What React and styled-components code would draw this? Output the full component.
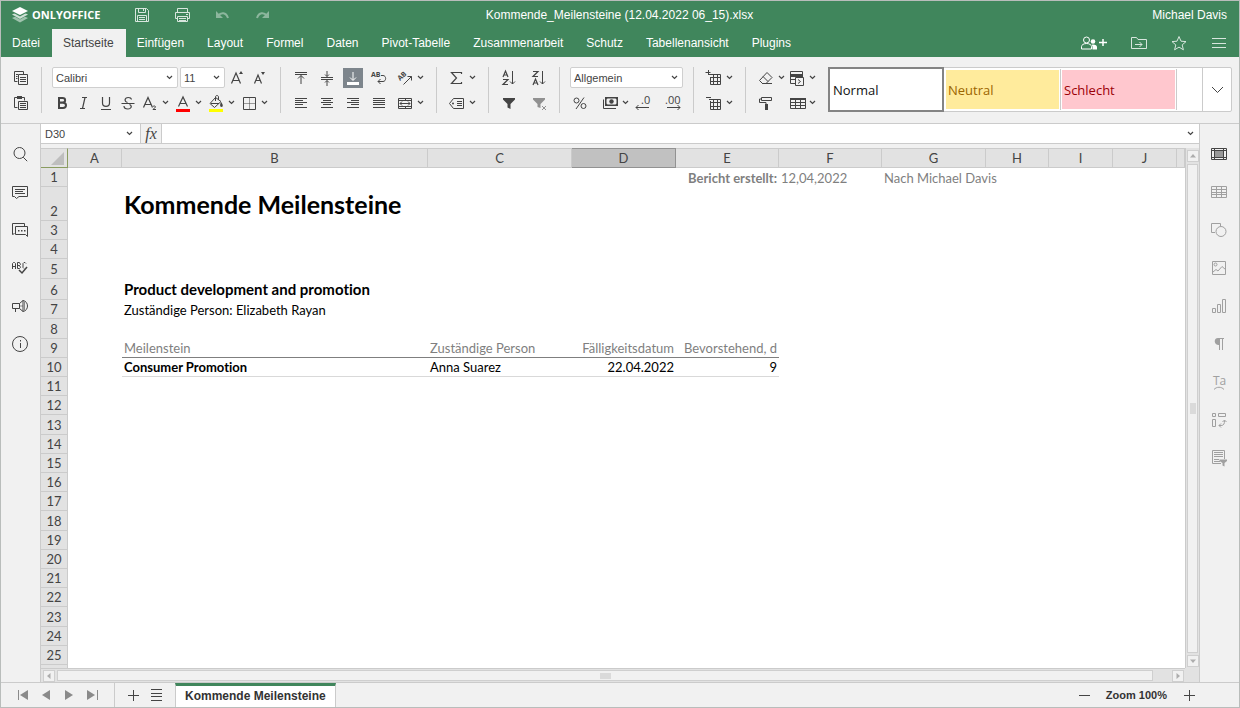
import React, { useState } from "react";
import styled, { createGlobalStyle } from "styled-components";

const GlobalStyle = createGlobalStyle`
  * {
    box-sizing: border-box;
  }
  body {
    margin: 0;
    font-family: "Liberation Sans", Arial, sans-serif;
    font-size: 12px;
    color: #444;
  }
  button,
  input,
  select {
    font: inherit;
    color: inherit;
    border: 0;
    padding: 0;
    margin: 0;
    background: none;
    border-radius: 0;
  }
  button {
    cursor: pointer;
  }
`;

const App = () => (
  <>
    <GlobalStyle />
    <Editor>
      <Header />
      <Toolbar />
      <Workspace>
        <Rail side="left" items={leftRail} />
        <Center>
          <FormulaBar />
          <SheetArea />
        </Center>
        <Rail side="right" items={rightRail} />
      </Workspace>
      <StatusBar />
    </Editor>
  </>
);

const Editor = styled.div`
  display: flex;
  flex-direction: column;
  height: 100vh;
  border: 1px solid #b9bdbb;
  background: #f1f1f1;
  overflow: hidden;
`;

const Workspace = styled.div`
  display: flex;
  flex: 1;
  min-height: 0;
`;

const Center = styled.div`
  display: flex;
  flex-direction: column;
  flex: 1;
  min-width: 0;
`;

/* ---------- icons ---------- */

const Svg = styled.svg`
  display: block;
  flex: none;
  fill: none;
  stroke: currentColor;
  stroke-width: 1;
  overflow: visible;
  .fill {
    fill: currentColor;
    stroke: none;
  }
  text {
    fill: currentColor;
    stroke: none;
    font-family: "Open Sans", sans-serif;
  }
`;

const Icon = ({ children }) => (
  <Svg width="20" height="20" viewBox="0 0 20 20" aria-hidden="true">
    {children}
  </Svg>
);

const Caret = () => (
  <Svg width="7" height="5" viewBox="0 0 7 5" aria-hidden="true">
    <path d="M1 1l2.5 2.5L6 1" strokeWidth="1.2" />
  </Svg>
);

const hLines = rows => rows.map(([x1, x2, y]) => `M${x1} ${y}.5H${x2}`).join("");

const icons = {
  save: (
    <path d="M3.500 3.500h11l2 2v11h-13zM6.500 3.500v4h7v-4M11.500 4v2M5.500 16.500v-6h9v6M7 12.500h6M7 14.500h6" />
  ),
  print: (
    <path d="M5.500 7.500v-4h10v4M5.500 13.500h-2v-6h14v6h-2M5.500 11.500h10v5h-10zM7 13.500h7M7 15.500h7M14 9.500h2" />
  ),
  undo: (
    <>
      <path className="fill" d="M4 6v7h7l-3-3z" />
      <path d="M6 11c3-4 8-4 10 2" strokeWidth="2" />
    </>
  ),
  redo: (
    <>
      <path className="fill" d="M17 6v7h-7l3-3z" />
      <path d="M15 11c-3-4-8-4-10 2" strokeWidth="2" />
    </>
  ),
  share: (
    <>
      <circle cx="5.500" cy="7" r="3" />
      <path d="M.5 16v-2.500c0-1.500 2-3 5-3s5 1.500 5 3V16z" />
      <circle className="fill" cx="12" cy="8.500" r="2.300" />
      <path className="fill" d="M12 11.500c2.500 0 4 1 4 2.500v2.500h-4.500V14c0-1-.5-1.800-1-2.300z" />
    </>
  ),
  folder: (
    <path d="M2.500 15.500v-11h5l1.500 2h8.500v9zM6 11.500h7M10.500 9l2.500 2.500-2.500 2.500" />
  ),
  star: (
    <path d="M10 3.500l2 4.700 5 .4-3.800 3.300 1.200 4.900-4.400-2.700-4.400 2.700 1.200-4.900L3 8.600l5-.4z" />
  ),
  menu: <path d="M3 5.500h14M3 10.500h14M3 14.500h14" />,
  copy: (
    <>
      <path d="M6.500 13.500h-3v-10h9v2.500M5 6.500h2M5 8.500h1.500M5 10.500h1.500" />
      <path d="M7.500 6.500h9v10h-9zM9 9.500h6M9 11.500h6M9 13.500h6" />
    </>
  ),
  paste: (
    <>
      <path d="M6.500 14.500h-3v-10h10v3" />
      <path className="fill" d="M6 3h5v3H6z" />
      <path d="M7.500 8.500h9v8h-9zM9 10.500h6M9 12.500h6M9 14.500h6" />
    </>
  ),
  bigger: (
    <>
      <path d="M4.500 15.500L9 5l4.500 10.500M6 12.500h6" strokeWidth="1.200" />
      <path className="fill" d="M12 6l2-3 2 3z" />
    </>
  ),
  smaller: (
    <>
      <path d="M5.500 15.500L9 7l3.500 8.500M6.500 12.500h5" strokeWidth="1.200" />
      <path className="fill" d="M12 4l2 3 2-3z" />
    </>
  ),
  bold: (
    <path d="M7 5h3.500c3.500 0 3.500 4.500 0 4.500H7zM7 9.700h4c4 0 4 5.300 0 5.300H7z" strokeWidth="2" />
  ),
  italic: <path d="M8 4.500h5M6 15.500h5M11 4.500l-2.500 11" strokeWidth="1.200" />,
  underline: <path d="M6.500 4v6c0 4.500 7 4.500 7 0V4M5 16.500h10" strokeWidth="1.200" />,
  strike: (
    <path
      d="M13.500 6.500C13 4 7.500 3.500 7 7c0 1 .8 2 2.500 2.500M11.500 11.500c3.500 2 1 4.500-1.500 4.500s-4-1-4-3M3.500 10.500h13"
      strokeWidth="1.200"
    />
  ),
  sub: (
    <>
      <path d="M3.500 14.500L8 4.500l4.500 10M5 11.500h6" strokeWidth="1.200" />
      <path d="M13 13.500c1-1 2.500-.5 2.500.5s-2.500 1.500-2.500 2.500h3" />
    </>
  ),
  fontColor: (
    <>
      <path d="M5.500 13.500L10 4l4.500 9.500M7 10.500h6" strokeWidth="1.200" />
      <path d="M3 16h14v3H3z" fill="#f00" stroke="none" />
    </>
  ),
  fillColor: (
    <>
      <path d="M9.500 4.500l-5.500 6 4.500 4 6.500-6zM9.500 8V4c0-2 3-2 3 0v3M5 10.500h8" />
      <path className="fill" d="M15 9c2 2 2.500 5 .5 5s-1.500-3-.5-5z" />
      <path d="M3 16h14v3H3z" fill="#ff0" stroke="none" />
    </>
  ),
  borders: (
    <>
      <path d="M4.500 4.500h12v12h-12z" />
      <path d="M10.500 5v11M5 10.500h11" opacity=".5" />
    </>
  ),
  alignTop: <path d="M4 4.500h12M4 6.500h12M10 16V7.500M7 10.500l3-3 3 3" />,
  alignMiddle: <path d="M4 9.500h12M4 11.500h12M10 3v5.500M8 6.500l2 2 2-2M10 18v-5.500M8 14.500l2-2 2 2" />,
  alignBottom: (
    <>
      <path d="M10 4v8M7 9.500l3 3 3-3" />
      <path d="M4 14h12v3H4z" fill="currentColor" stroke="none" />
    </>
  ),
  wrap: (
    <>
      <text x="2" y="9" fontSize="7" fontWeight="700">AB</text>
      <path d="M12 7.500h2c3.500 0 3.500 6 0 6H9M11.500 11L9 13.500l2.500 2.500" />
    </>
  ),
  orient: (
    <>
      <text x="5" y="13" fontSize="7" fontWeight="700" transform="rotate(-42 5 13)">AB</text>
      <path d="M8.500 16.500l8-8M12.500 8.500h4v4" />
    </>
  ),
  left: <path d={hLines([[4, 16, 5], [4, 12, 7], [4, 16, 9], [4, 12, 11], [4, 16, 14]])} />,
  center: <path d={hLines([[4, 16, 5], [6, 14, 7], [4, 16, 9], [6, 14, 11], [4, 16, 14]])} />,
  right: <path d={hLines([[4, 16, 5], [8, 16, 7], [4, 16, 9], [8, 16, 11], [4, 16, 14]])} />,
  justify: <path d={hLines([[4, 16, 5], [4, 16, 7], [4, 16, 9], [4, 16, 11], [4, 16, 14]])} />,
  merge: (
    <path d="M3.500 5.500h13v10h-13zM3.500 7.500h13M3.500 13.500h13M10.500 5.500v2M10.500 13.500v2M5 10.500h10M7 8.500l-2 2 2 2M13 8.500l2 2-2 2" />
  ),
  sum: <path d="M14.500 6V4.500h-10l5 5.500-5 5.500h10V14" strokeWidth="1.200" />,
  named: (
    <>
      <path d="M6.500 5.500h10v10h-10l-4-5z" />
      <circle className="fill" cx="6" cy="10.500" r="1" />
      <path d="M10 8.500h5M10 10.500h5M10 12.500h5" />
    </>
  ),
  sortAz: (
    <>
      <path d="M4 9l2.500-6L9 9M5 7h3M4 11.500h5l-5 5h5" strokeWidth="1.200" />
      <path d="M13.500 3v13M11 13.500l2.500 2.500 2.500-2.500" />
    </>
  ),
  sortZa: (
    <>
      <path d="M4 3.500h5l-5 5h5M4 17l2.500-6L9 17M5 15h3" strokeWidth="1.200" />
      <path d="M13.500 3v13M11 13.500l2.500 2.500 2.500-2.500" />
    </>
  ),
  filter: <path className="fill" d="M4 5h12v1.500L11.500 11v5l-3-1.500V11L4 6.500z" />,
  clearFilter: (
    <g opacity=".55">
      <path className="fill" d="M4 5h12v1.500L11.500 11v4l-3-1V11L4 6.500z" />
      <path d="M13 13l4 4M17 13l-4 4" />
    </g>
  ),
  percent: (
    <g>
      <circle cx="6.500" cy="7.500" r="2.500" />
      <circle cx="13.500" cy="13" r="2.500" />
      <path d="M14 4.500l-8 11.500" />
    </g>
  ),
  money: (
    <>
      <path className="fill" fillRule="evenodd" d="M5 4h13v9H5zM6.500 6.500v4l1 1h8l1-1v-4l-1-1h-8z" />
      <circle className="fill" cx="11.500" cy="8.500" r="2.200" />
      <path d="M3.500 6.500v9H16" />
    </>
  ),
  decLess: (
    <>
      <text x="8" y="11" fontSize="11">.0</text>
      <path d="M3 14.500h13M5.500 12L3 14.500 5.500 17" />
    </>
  ),
  decMore: (
    <>
      <text x="2" y="11" fontSize="11">.00</text>
      <path d="M4 14.500h13M14.500 12l2.500 2.500-2.500 2.500" />
    </>
  ),
  addCells: (
    <path d="M5 6.500h11.500v10h-10V9M6.500 9.500h10M6.500 13.500h10M9.500 6v10.500M13.500 6v10.500M1.500 4.500h5M4.500 2v5" />
  ),
  delCells: (
    <path d="M5 6.500h11.500v10h-10V8M6.500 9.500h10M6.500 13.500h10M9.500 6v10.500M13.500 6v10.500M2 4.500h5" />
  ),
  eraser: <path d="M11 4.500l5 5-6 6H6.500l-3-3zM7 8.500l5 5M6 15.500h10" />,
  condFormat: (
    <>
      <path d="M8 15.500H3.500v-12h12V9M4 11.500h4" />
      <path className="fill" d="M4 6h11v3H4z" />
      <path d="M8.500 9.500h8v8h-8zM11 11.500l2.500 2-2.500 2" />
    </>
  ),
  painter: (
    <>
      <path d="M5.500 4.500h10v3h-10zM5.500 6H3.500v3.500H10v2" />
      <path className="fill" d="M9 11h3v6H9z" />
    </>
  ),
  tableTpl: (
    <>
      <path d="M3.500 5.500h15v10h-15zM3.500 9.500h15M3.500 12.500h15M8.500 6v10M13.500 6v10" />
      <path className="fill" d="M3 5h16v2H3z" />
    </>
  ),
  search: <path d="M15 9a5.500 5.500 0 1 1-11 0 5.500 5.500 0 0 1 11 0zM13.200 13.200l4 4" />,
  comment: <path d="M2.500 4.500h15v10H9l-2.500 2-2-2h-2zM5 7.500h10M5 9.500h8M5 11.500h10" />,
  chat: (
    <>
      <path d="M4.500 13.500l-2 1v-11h12v3" />
      <path d="M5.500 6.500h12v10l-2-2h-10z" />
      <path className="fill" d="M8 10h1.500v1.500H8zM11 10h1.500v1.500H11zM14 10h1.500v1.500H14z" />
    </>
  ),
  spell: (
    <>
      <path d="M2.500 11V5.500l1-1h1l1 1V11M2.500 8.500h3M7.500 4.500v6h2l1-1-1-2 1-1-1-2zM7.500 7.500h2M16 5.500l-1-1h-1l-1 1v4l1 1" />
      <path d="M9 12l3 3 5-6" strokeWidth="1.500" />
    </>
  ),
  feedback: (
    <>
      <path d="M2.500 7.500h7v5h-7zM5.500 13v3M9.500 7.500l3.500-3v11l-3.500-3M13 4.500c6 1 6 10 0 11" />
      <path d="M14.500 6v8M9 10h4" opacity=".6" />
    </>
  ),
  info: (
    <>
      <circle cx="10" cy="10" r="7.500" />
      <path d="M10.500 9v5M10.500 6v1.500" />
    </>
  ),
  cell: (
    <>
      <path d="M2.500 4.500h15v11h-15zM5.500 4.500v11M14.500 4.500v11M2.500 6.500h15M2.500 13.500h15" />
      <path d="M5.500 6.500h9v7h-9z" fill="#999" />
    </>
  ),
  table: <path d="M2.500 4.500h15v11h-15zM2.500 7.500h15M2.500 10.500h15M2.500 12.500h15M7.500 4.500v11M12.500 4.500v11" />,
  shape: (
    <>
      <path d="M6 12.500H2.500v-9h9V6" />
      <circle cx="12" cy="11.500" r="5" />
    </>
  ),
  image: (
    <>
      <path d="M3.500 3.500h13v13h-13zM4 14l3-2.500 2 1.500 4-4.500 3.500 3" />
      <circle cx="6.500" cy="6.500" r="1.500" />
    </>
  ),
  chart: <path d="M3.500 12.500h3v4h-3zM8.500 8.500h3v8h-3zM13.500 3.500h3v13h-3z" />,
  para: (
    <>
      <path className="fill" d="M9 4h6v1h-1v11h-1V5h-2v11h-1v-5C4.500 11 4.500 4 9 4z" />
      <path className="fill" d="M9 4h2v7H9z" />
    </>
  ),
  textArt: (
    <>
      <text x="4" y="13" fontSize="12">Ta</text>
      <path d="M5 17.500c2.500-3 7.500-3 10 0" />
    </>
  ),
  pivot: (
    <path d="M3.500 3.500h3v3h-3zM9.500 3.500h7v3h-7zM3.500 9.500h3v7h-3zM10 15.500h2c3 0 3.500-2 3.500-5M13.500 12l2-2 2 2M12 13.500l-2 2 2 2" />
  ),
  slicer: (
    <>
      <path d="M12 15.500H3.500v-13h12V11M5 4.500h9M5 6.500h9M5 8.500h9M5 11.500h5M5 13.500h6" />
      <path className="fill" d="M10.500 11.500H18v1.500l-2.500 2v3.500l-2-1v-2.500l-3-2z" />
    </>
  ),
  list: <path d="M4 4.500h11M4 8.500h11M4 11.500h11M4 15.500h11" />,
  first: (
    <>
      <path className="fill" d="M15 5v10l-8-5z" />
      <path d="M5.500 5v10" />
    </>
  ),
  prev: <path className="fill" d="M14 5v10l-8-5z" />,
  next: <path className="fill" d="M6 5v10l8-5z" />,
  last: (
    <>
      <path className="fill" d="M5 5v10l8-5z" />
      <path d="M15.500 5v10" />
    </>
  ),
  plus: <path d="M10.500 5v11M5 10.500h11" />,
  minus: <path d="M5 10.500h11" />,
  up: <path className="fill" d="M7 11.500h6L10 8z" />,
  down: <path className="fill" d="M7 8.500h6L10 12z" />,
  leftArrow: <path className="fill" d="M11.500 7v6L8 10z" />,
  rightArrow: <path className="fill" d="M8.500 7v6l3.500-3z" />
};

/* ---------- header ---------- */

const HeaderBar = styled.header`
  flex: none;
  background: #40865c;
  color: #fff;
`;

const TitleRow = styled.div`
  display: grid;
  grid-template-columns: 1fr auto 1fr;
  align-items: center;
  height: 28px;
  padding: 0 12px 0 11px;
`;

const TitleLeft = styled.div`
  display: flex;
  align-items: center;
`;

const Logo = styled.a`
  display: flex;
  align-items: center;
  gap: 4px;
  width: 120px;
  color: #fff;
  text-decoration: none;
  font: 700 11px/16px "Open Sans", sans-serif;
`;

const QuickActions = styled.div`
  display: flex;
  gap: 20px;
`;

const HeaderButton = styled.button`
  display: flex;
  align-items: center;
  justify-content: center;
  width: 20px;
  height: 20px;
  opacity: ${props => (props.disabled ? 0.4 : 0.8)};
`;

const UserName = styled.span`
  justify-self: end;
`;

const TabRow = styled.nav`
  display: flex;
  height: 28px;
  padding-right: 10px;
`;

const Tab = styled.button`
  padding: 0 12px 0 11px;
  white-space: nowrap;
  color: ${props => (props.$active ? "#444" : "#fff")};
  background: ${props => (props.$active ? "#f1f1f1" : "none")};
`;

const TabActions = styled.div`
  display: flex;
  align-items: center;
  gap: 20px;
  margin-left: auto;
`;

const ShareButton = styled(HeaderButton)`
  width: 28px;
  justify-content: flex-start;
  opacity: 1;
`;

const tabs = [
  "Datei",
  "Startseite",
  "Einfügen",
  "Layout",
  "Formel",
  "Daten",
  "Pivot-Tabelle",
  "Zusammenarbeit",
  "Schutz",
  "Tabellenansicht",
  "Plugins"
];

const Header = () => {
  const [active, setActive] = useState("Startseite");
  return (
    <HeaderBar>
      <TitleRow>
        <TitleLeft>
          <Logo href="#">
            <svg width="16" height="16" viewBox="0 0 16 16" aria-hidden="true">
              <path d="M0 11l8-3.500 8 3.500-8 4.500z" fill="#fff" opacity=".5" />
              <path d="M0 8l8-3.500L16 8l-8 4.500z" fill="#40865c" />
              <path d="M0 7.500L8 4l8 3.500L8 12z" fill="#fff" opacity=".75" />
              <path d="M0 5l8-3.500L16 5 8 9.500z" fill="#40865c" />
              <path d="M0 4l8-4 8 4-8 4z" fill="#fff" />
            </svg>
            ONLYOFFICE
          </Logo>
          <QuickActions>
            <HeaderButton aria-label="Speichern"><Icon>{icons.save}</Icon></HeaderButton>
            <HeaderButton aria-label="Drucken"><Icon>{icons.print}</Icon></HeaderButton>
            <HeaderButton aria-label="Rückgängig" disabled><Icon>{icons.undo}</Icon></HeaderButton>
            <HeaderButton aria-label="Wiederholen" disabled><Icon>{icons.redo}</Icon></HeaderButton>
          </QuickActions>
        </TitleLeft>
        <span>Kommende_Meilensteine (12.04.2022 06_15).xlsx</span>
        <UserName>Michael Davis</UserName>
      </TitleRow>
      <TabRow>
        {tabs.map(name => (
          <Tab key={name} $active={name === active} onClick={() => setActive(name)}>
            {name}
          </Tab>
        ))}
        <TabActions>
          <ShareButton aria-label="Freigeben">
            <Svg width="28" height="20" viewBox="0 0 28 20" aria-hidden="true">
              {icons.share}
              <path d="M18 9.500h8M22 6v7" strokeWidth="1.500" />
            </Svg>
          </ShareButton>
          <HeaderButton aria-label="Dateispeicherort öffnen"><Icon>{icons.folder}</Icon></HeaderButton>
          <HeaderButton aria-label="Favorit"><Icon>{icons.star}</Icon></HeaderButton>
          <HeaderButton aria-label="Ansicht-Einstellungen"><Icon>{icons.menu}</Icon></HeaderButton>
        </TabActions>
      </TabRow>
    </HeaderBar>
  );
};

/* ---------- toolbar ---------- */

const ToolbarBar = styled.div`
  display: flex;
  flex: none;
  padding: 10px 7px 10px 0;
  border-bottom: 1px solid #cbcbcb;
`;

const Group = styled.div`
  display: flex;
  flex-direction: column;
  flex: none;
  gap: 4px;
  padding: 0 10px;
  border-right: ${props => (props.$last ? "0" : "1px solid #cbcbcb")};
`;

const Row = styled.div`
  display: flex;
  align-items: center;
  height: 21px;
  gap: ${props => props.$gap || 0}px;
  justify-content: ${props => (props.$spread ? "space-between" : "flex-start")};
`;

const ToolButton = styled.button`
  width: 20px;
  height: 20px;
  color: ${props => (props.$active ? "#fff" : "#444")};
  background: ${props => (props.$active ? "#7d858c" : "none")};
`;

const MenuButton = styled(ToolButton)`
  display: flex;
  align-items: center;
  gap: 2px;
  width: 31px;
`;

const SelectBox = styled.label`
  display: flex;
  align-items: center;
  width: ${props => props.$width}px;
  height: 21px;
  padding: 0 4px 0 3px;
  border: 1px solid #cfcfcf;
  border-radius: 2px;
  background: #fff;
  font-size: 11px;
  select {
    flex: 1;
    min-width: 0;
    appearance: none;
    outline: none;
  }
`;

const Tool = ({ icon, label, active }) => (
  <ToolButton aria-label={label} $active={active}>
    <Icon>{icons[icon]}</Icon>
  </ToolButton>
);

const MenuTool = ({ icon, label }) => (
  <MenuButton aria-label={label}>
    <Icon>{icons[icon]}</Icon>
    <Caret />
  </MenuButton>
);

const Select = ({ label, width, options }) => (
  <SelectBox $width={width}>
    <select aria-label={label}>
      {options.map(option => (
        <option key={option}>{option}</option>
      ))}
    </select>
    <Caret />
  </SelectBox>
);

const Gallery = styled.div`
  display: flex;
  flex: 1;
  min-width: 0;
  height: 45px;
  border: 1px solid #cbcbcb;
  border-radius: 2px;
  background: #fff;
`;

const StyleItem = styled.button`
  flex: none;
  width: ${props => (props.$selected ? 116 : 115)}px;
  margin: ${props => (props.$selected ? "-1px 1px -1px -1px" : "1px 1px 1px 0")};
  padding-left: ${props => (props.$selected ? 3 : 2)}px;
  text-align: left;
  font: 13px/20px "Open Sans", sans-serif;
  color: ${props => props.$color};
  background: ${props => props.$bg};
  border: ${props => (props.$selected ? "2px solid #848484" : "1px solid #fff")};
  box-shadow: ${props => (props.$selected ? "none" : "1px 0 0 #cbcbcb")};
`;

const GalleryMore = styled.button`
  display: flex;
  align-items: center;
  justify-content: center;
  width: 29px;
  margin-left: auto;
  border-left: 1px solid #cbcbcb;
`;

const Toolbar = () => (
  <ToolbarBar>
    <Group>
      <Row><Tool icon="copy" label="Kopieren" /></Row>
      <Row><Tool icon="paste" label="Einfügen" /></Row>
    </Group>
    <Group>
      <Row $gap={2}>
        <Select label="Schriftart" width={126} options={["Calibri", "Arial"]} />
        <Select label="Schriftgrad" width={45} options={["11", "12", "14"]} />
        <Tool icon="bigger" label="Schriftart vergrößern" />
        <Tool icon="smaller" label="Schriftart verkleinern" />
      </Row>
      <Row $gap={2}>
        <Tool icon="bold" label="Fett" />
        <Tool icon="italic" label="Kursiv" />
        <Tool icon="underline" label="Unterstrichen" />
        <Tool icon="strike" label="Durchgestrichen" />
        <MenuTool icon="sub" label="Tiefgestellt" />
        <MenuTool icon="fontColor" label="Schriftfarbe" />
        <MenuTool icon="fillColor" label="Füllfarbe" />
        <MenuTool icon="borders" label="Rahmenlinien" />
      </Row>
    </Group>
    <Group>
      <Row $gap={6}>
        <Tool icon="alignTop" label="Oben ausrichten" />
        <Tool icon="alignMiddle" label="Mittig ausrichten" />
        <Tool icon="alignBottom" label="Unten ausrichten" active />
        <Tool icon="wrap" label="Zeilenumbruch" />
        <MenuTool icon="orient" label="Ausrichtung" />
      </Row>
      <Row $gap={6}>
        <Tool icon="left" label="Linksbündig" />
        <Tool icon="center" label="Zentriert" />
        <Tool icon="right" label="Rechtsbündig" />
        <Tool icon="justify" label="Blocksatz" />
        <MenuTool icon="merge" label="Verbinden" />
      </Row>
    </Group>
    <Group>
      <Row><MenuTool icon="sum" label="Summe" /></Row>
      <Row><MenuTool icon="named" label="Benannte Bereiche" /></Row>
    </Group>
    <Group>
      <Row $gap={10}>
        <Tool icon="sortAz" label="Aufsteigend sortieren" />
        <Tool icon="sortZa" label="Absteigend sortieren" />
      </Row>
      <Row $gap={10}>
        <Tool icon="filter" label="Filter" />
        <Tool icon="clearFilter" label="Filter löschen" />
      </Row>
    </Group>
    <Group>
      <Row>
        <Select label="Zahlenformat" width={113} options={["Allgemein", "Zahl"]} />
      </Row>
      <Row $gap={10}>
        <Tool icon="percent" label="Prozent" />
        <Row $gap={2}>
          <MenuTool icon="money" label="Buchhaltung" />
          <Tool icon="decLess" label="Dezimalstelle entfernen" />
        </Row>
        <Tool icon="decMore" label="Dezimalstelle hinzufügen" />
      </Row>
    </Group>
    <Group>
      <Row><MenuTool icon="addCells" label="Zellen einfügen" /></Row>
      <Row><MenuTool icon="delCells" label="Zellen löschen" /></Row>
    </Group>
    <Group $last>
      <Row>
        <MenuTool icon="eraser" label="Löschen" />
        <MenuTool icon="condFormat" label="Bedingte Formatierung" />
      </Row>
      <Row $spread>
        <Tool icon="painter" label="Format übertragen" />
        <MenuTool icon="tableTpl" label="Als Tabelle formatieren" />
      </Row>
    </Group>
    <Gallery>
      <StyleItem $selected $color="#111" $bg="#fff">Normal</StyleItem>
      <StyleItem $color="#9c6500" $bg="#ffeb9c">Neutral</StyleItem>
      <StyleItem $color="#9c0006" $bg="#ffc7ce">Schlecht</StyleItem>
      <GalleryMore aria-label="Weitere Formatvorlagen">
        <Svg width="13" height="8" viewBox="0 0 13 8" aria-hidden="true">
          <path d="M1 1l5.500 5.500L12 1" />
        </Svg>
      </GalleryMore>
    </Gallery>
  </ToolbarBar>
);

/* ---------- side rails ---------- */

const RailBar = styled.aside`
  display: flex;
  flex-direction: column;
  flex: none;
  align-items: center;
  gap: 18px;
  width: 40px;
  padding: 20px 2px 0 0;
  border-left: ${props => (props.$side === "right" ? "1px solid #cbcbcb" : "0")};
  border-right: ${props => (props.$side === "left" ? "1px solid #cbcbcb" : "0")};
`;

const RailButton = styled.button`
  width: 20px;
  height: 20px;
  color: ${props => (props.disabled ? "#a0a0a0" : "#444")};
`;

const leftRail = [
  { icon: "search", label: "Suchen" },
  { icon: "comment", label: "Kommentare" },
  { icon: "chat", label: "Chat" },
  { icon: "spell", label: "Rechtschreibprüfung" },
  { icon: "feedback", label: "Feedback und Support" },
  { icon: "info", label: "Info" }
];

const rightRail = [
  { icon: "cell", label: "Zelleneinstellungen" },
  { icon: "table", label: "Tabelleneinstellungen", disabled: true },
  { icon: "shape", label: "Formeinstellungen", disabled: true },
  { icon: "image", label: "Bildeinstellungen", disabled: true },
  { icon: "chart", label: "Diagrammeinstellungen", disabled: true },
  { icon: "para", label: "Absatzeinstellungen", disabled: true },
  { icon: "textArt", label: "TextArt-Einstellungen", disabled: true },
  { icon: "pivot", label: "Pivot-Einstellungen", disabled: true },
  { icon: "slicer", label: "Datenschnitt-Einstellungen", disabled: true }
];

const Rail = ({ side, items }) => (
  <RailBar $side={side}>
    {items.map(({ icon, label, disabled }) => (
      <RailButton key={icon} aria-label={label} disabled={disabled}>
        <Icon>{icons[icon]}</Icon>
      </RailButton>
    ))}
  </RailBar>
);

/* ---------- formula bar ---------- */

const FormulaRow = styled.div`
  display: flex;
  flex: none;
  height: 20px;
  border-bottom: 1px solid #cbcbcb;
  background: #fff;
`;

const CellName = styled.div`
  display: flex;
  align-items: center;
  width: 100px;
  padding: 0 7px 0 4px;
  border-right: 1px solid #cbcbcb;
  font-size: 11px;
  input {
    flex: 1;
    min-width: 0;
  }
`;

const FxButton = styled.button`
  width: 21px;
  background: #f1f1f1;
  border-right: 1px solid #cbcbcb;
  font: italic 16px/18px "Liberation Serif", serif;
`;

const FormulaInput = styled.input`
  flex: 1;
  min-width: 0;
  padding: 0 6px;
`;

const Expand = styled.button`
  display: flex;
  align-items: center;
  justify-content: center;
  width: 17px;
`;

const FormulaBar = () => (
  <FormulaRow>
    <CellName>
      <input aria-label="Namensfeld" defaultValue="D30" />
      <Caret />
    </CellName>
    <FxButton aria-label="Funktion einfügen">fx</FxButton>
    <FormulaInput aria-label="Formel" />
    <Expand aria-label="Bearbeitungsleiste erweitern"><Caret /></Expand>
  </FormulaRow>
);

/* ---------- sheet ---------- */

const SheetGrid = styled.div`
  display: grid;
  grid-template-columns: minmax(0, 1fr) 14px;
  grid-template-rows: minmax(0, 1fr) 14px;
  flex: 1;
  min-height: 0;
  margin-top: 4px;
  background: #e2e2e2;
`;

const SheetView = styled.div`
  overflow: hidden;
  background: #fff;
`;

const Grid = styled.table`
  width: 100%;
  table-layout: fixed;
  border-collapse: separate;
  border-spacing: 0;
  font: 13px/18px Lato, sans-serif;
  font-variant-ligatures: none;
  color: #000;
  th,
  td {
    padding: 0 2px;
    vertical-align: bottom;
    white-space: nowrap;
  }
`;

const HeadCell = styled.th`
  height: 20px;
  font-weight: 400;
  color: #444;
  background: ${props => (props.$active ? "#c1c1c1" : "#e2e2e2")};
  border: solid ${props => (props.$active ? "#929292" : "#cbcbcb")};
  border-width: 1px 1px 1px 0;
`;

const Corner = styled(HeadCell)`
  border-color: #cbcbcb #8a9c60 #8a9c60 #cbcbcb;
  svg {
    margin: 0 1px 2px auto;
  }
`;

const RowHead = styled.th`
  height: ${props => props.$height}px;
  font-weight: 400;
  color: #444;
  background: #e2e2e2;
  border: solid #cbcbcb;
  border-width: 0 1px 1px 0;
`;

const lineHeights = { 15: 21, 25: 34 };

const Cell = styled.td`
  text-align: ${props => props.$align || "left"};
  font-weight: ${props => (props.$bold ? 700 : 400)};
  font-size: ${props => props.$size || 13}px;
  line-height: ${props => lineHeights[props.$size] || 18}px;
  color: ${props => (props.$muted ? "#7f7f7f" : "#000")};
  border-bottom: ${props => (props.$line ? `1px solid ${props.$line}` : "0")};
`;

const columns = [
  { name: "A", width: 54 },
  { name: "B", width: 306 },
  { name: "C", width: 144 },
  { name: "D", width: 104 },
  { name: "E", width: 103 },
  { name: "F", width: 103 },
  { name: "G", width: 104 },
  { name: "H", width: 63 },
  { name: "I", width: 64 },
  { name: "J", width: 64 }
];

const rowHeights = [
  19, 34, 19, 19, 20, 21, 19, 20, 19, 19, 19, 19, 20,
  19, 19, 19, 19, 20, 19, 19, 19, 19, 20, 19, 19
];

const cells = {
  E1: { text: "Bericht erstellt:", bold: true, align: "right", muted: true },
  F1: { text: "12,04,2022", muted: true },
  G1: { text: "Nach Michael Davis", muted: true },
  B2: { text: "Kommende Meilensteine", bold: true, size: 25 },
  B6: { text: "Product development and promotion", bold: true, size: 15 },
  B7: { text: "Zuständige Person: Elizabeth Rayan" },
  B9: { text: "Meilenstein", muted: true, line: "#7f7f7f" },
  C9: { text: "Zuständige Person", muted: true, line: "#7f7f7f" },
  D9: { text: "Fälligkeitsdatum", align: "right", muted: true, line: "#7f7f7f" },
  E9: { text: "Bevorstehend, d", align: "right", muted: true, line: "#7f7f7f" },
  B10: { text: "Consumer Promotion", bold: true, line: "#d9d9d9" },
  C10: { text: "Anna Suarez", line: "#d9d9d9" },
  D10: { text: "22.04.2022", align: "right", line: "#d9d9d9" },
  E10: { text: "9", align: "right", line: "#d9d9d9" }
};

const VScroll = styled.div`
  display: flex;
  flex-direction: column;
  gap: 2px;
  padding: 2px 1px 1px;
  border-left: 1px solid #cbcbcb;
`;

const HScroll = styled.div`
  display: flex;
  gap: 2px;
  padding: 1px 1px 1px 2px;
  border-top: 1px solid #cbcbcb;
`;

const ScrollButton = styled.button`
  display: flex;
  flex: none;
  align-items: center;
  justify-content: center;
  width: 12px;
  height: 12px;
  border: 1px solid #cfcfcf;
  background: #f1f1f1;
  color: #adadad;
  overflow: hidden;
`;

const Thumb = styled.div`
  display: flex;
  flex: 1;
  align-items: center;
  justify-content: center;
  border: 1px solid #cfcfcf;
  background: #f1f1f1;
  margin-right: ${props => (props.$end ? 17 : 0)}px;
`;

const Grip = styled.span`
  width: ${props => (props.$vertical ? 6 : 11)}px;
  height: ${props => (props.$vertical ? 11 : 6)}px;
  background: #dadada;
`;

const SheetArea = () => (
  <SheetGrid>
    <SheetView>
      <Grid>
        <colgroup>
          <col style={{ width: 27 }} />
          {columns.map(({ name, width }) => (
            <col key={name} style={{ width }} />
          ))}
          <col />
        </colgroup>
        <thead>
          <tr>
            <Corner aria-label="Alles auswählen">
              <Svg width="13" height="13" viewBox="0 0 13 13" aria-hidden="true">
                <path d="M13 0v13H0z" fill="#bebebe" stroke="none" />
              </Svg>
            </Corner>
            {columns.map(({ name }) => (
              <HeadCell key={name} scope="col" $active={name === "D"}>{name}</HeadCell>
            ))}
            <HeadCell />
          </tr>
        </thead>
        <tbody>
          {rowHeights.map((height, i) => (
            <tr key={i}>
              <RowHead scope="row" $height={height}>{i + 1}</RowHead>
              {columns.map(({ name }) => {
                const cell = cells[name + (i + 1)];
                if (!cell) return <Cell key={name} />;
                return (
                  <Cell
                    key={name}
                    $align={cell.align}
                    $bold={cell.bold}
                    $size={cell.size}
                    $muted={cell.muted}
                    $line={cell.line}
                  >
                    {cell.text}
                  </Cell>
                );
              })}
              <Cell />
            </tr>
          ))}
          <tr>
            <RowHead $height={19} />
          </tr>
        </tbody>
      </Grid>
    </SheetView>
    <VScroll>
      <ScrollButton aria-label="Nach oben"><Icon>{icons.up}</Icon></ScrollButton>
      <Thumb><Grip $vertical /></Thumb>
      <ScrollButton aria-label="Nach unten"><Icon>{icons.down}</Icon></ScrollButton>
    </VScroll>
    <HScroll>
      <ScrollButton aria-label="Nach links"><Icon>{icons.leftArrow}</Icon></ScrollButton>
      <Thumb $end><Grip /></Thumb>
      <ScrollButton aria-label="Nach rechts"><Icon>{icons.rightArrow}</Icon></ScrollButton>
    </HScroll>
  </SheetGrid>
);

/* ---------- status bar ---------- */

const StatusRow = styled.footer`
  display: flex;
  flex: none;
  height: 25px;
  border-top: 1px solid #cbcbcb;
`;

const StatusGroup = styled.div`
  display: flex;
  align-items: center;
  gap: ${props => props.$gap}px;
  padding: 0 ${props => props.$pad}px;
`;

const StatusButton = styled.button`
  width: 20px;
  height: 20px;
  color: ${props => (props.$muted ? "#8a8a8a" : "#444")};
`;

const Divider = styled.div`
  width: 1px;
  background: #cbcbcb;
`;

const SheetTab = styled.button`
  padding: 0 9px 2px;
  border: solid #cbcbcb;
  border-width: 3px 1px 0;
  border-top-color: #40865c;
  background: #fff;
  font-weight: 700;
  color: #333;
`;

const ZoomBox = styled.div`
  display: flex;
  align-items: center;
  gap: 12px;
  margin-left: auto;
  padding-right: 40px;
  font-weight: 700;
  font-size: 11px;
  color: #333;
`;

const StatusBar = () => (
  <StatusRow>
    <StatusGroup $gap={3} $pad={12}>
      <StatusButton $muted aria-label="Erstes Blatt"><Icon>{icons.first}</Icon></StatusButton>
      <StatusButton $muted aria-label="Vorheriges Blatt"><Icon>{icons.prev}</Icon></StatusButton>
      <StatusButton $muted aria-label="Nächstes Blatt"><Icon>{icons.next}</Icon></StatusButton>
      <StatusButton $muted aria-label="Letztes Blatt"><Icon>{icons.last}</Icon></StatusButton>
    </StatusGroup>
    <Divider />
    <StatusGroup $gap={4} $pad={8}>
      <StatusButton aria-label="Blatt hinzufügen"><Icon>{icons.plus}</Icon></StatusButton>
      <StatusButton aria-label="Blattliste"><Icon>{icons.list}</Icon></StatusButton>
    </StatusGroup>
    <SheetTab>Kommende Meilensteine</SheetTab>
    <ZoomBox>
      <StatusButton aria-label="Verkleinern"><Icon>{icons.minus}</Icon></StatusButton>
      <span>Zoom 100%</span>
      <StatusButton aria-label="Vergrößern"><Icon>{icons.plus}</Icon></StatusButton>
    </ZoomBox>
  </StatusRow>
);

export default App;
